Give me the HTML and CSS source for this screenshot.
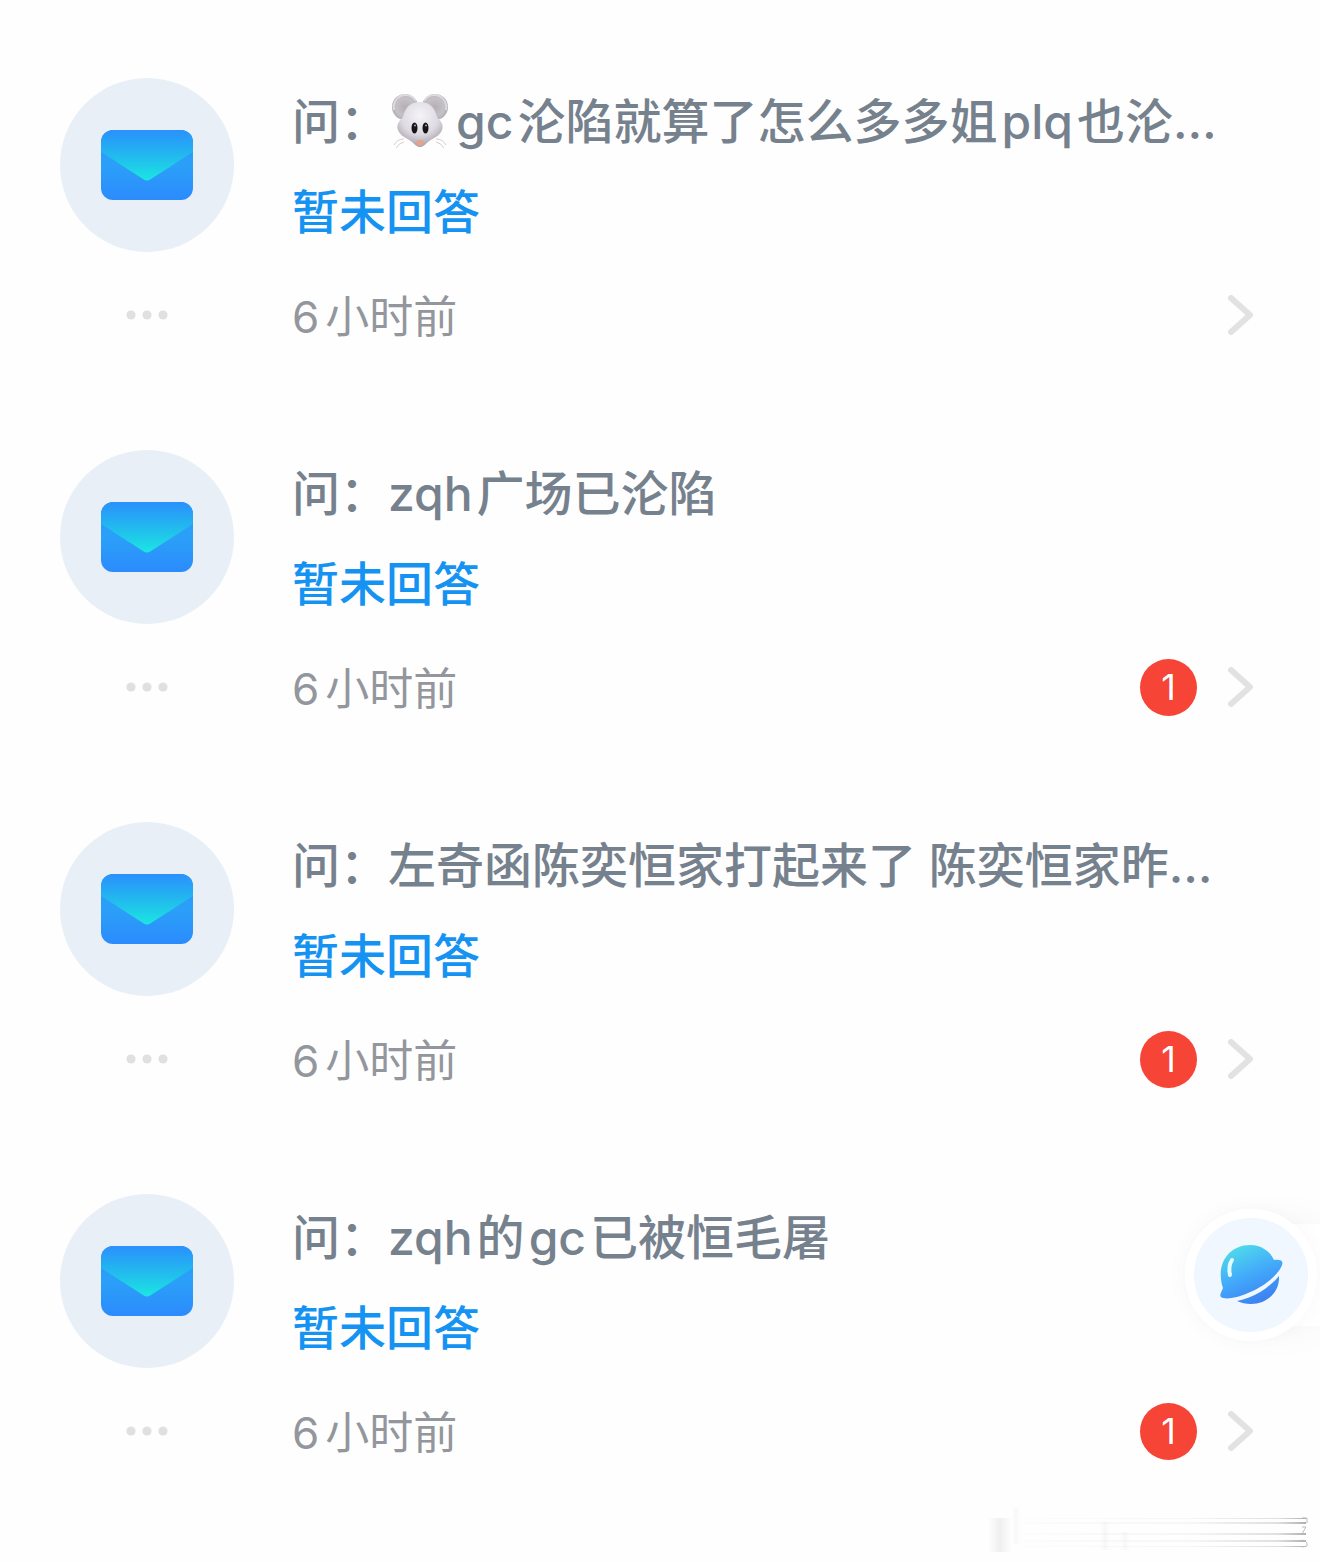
FILE: index.html
```
<!DOCTYPE html>
<html lang="zh-CN">
<head>
  <meta charset="UTF-8">
  <meta name="viewport" content="width=device-width, initial-scale=1.0">
  <title>我的提问</title>
  <link rel="stylesheet" href="styles.css">
</head>
<body>

<!-- shared icons -->
<svg class="sprite" aria-hidden="true">
  <defs>
    <linearGradient id="mail-body" x1="0" y1="0" x2="0" y2="1">
      <stop offset="0" stop-color="#2a96fb"/>
      <stop offset="0.5" stop-color="#2ba0f8"/>
      <stop offset="1" stop-color="#2b8bfd"/>
    </linearGradient>
    <linearGradient id="mail-flap" x1="0" y1="0" x2="0" y2="1">
      <stop offset="0" stop-color="#2a90fd"/>
      <stop offset="0.5" stop-color="#22b9ee"/>
      <stop offset="1" stop-color="#1be6e2"/>
    </linearGradient>
    <clipPath id="mail-clip"><rect width="92" height="70" rx="12"/></clipPath>
  </defs>
  <symbol id="mail" viewBox="0 0 92 70">
    <g clip-path="url(#mail-clip)">
      <rect width="92" height="70" fill="url(#mail-body)"/>
      <path d="M0 0H92V22L50 49Q46 52 42 49L0 22Z" fill="url(#mail-flap)"/>
    </g>
  </symbol>
  <symbol id="dots" viewBox="0 0 42 10">
    <circle cx="5" cy="5" r="4.6"/><circle cx="21" cy="5" r="4.6"/><circle cx="37" cy="5" r="4.6"/>
  </symbol>
  <symbol id="arrow" viewBox="0 0 26 40">
    <path d="M3 3L22 20L3 37" fill="none" stroke="#e2e2e2" stroke-width="6" stroke-linecap="round" stroke-linejoin="round"/>
  </symbol>
</svg>

<main class="list">
  <article class="item">
    <div class="item-main">
      <div class="avatar"><svg><use href="#mail"/></svg></div>
      <div class="content">
        <h2 class="question">问：<svg class="emoji" viewBox="0 0 60 60" role="img" aria-label="🐭">
          <defs>
            <radialGradient id="mouse-face" cx="0.5" cy="0.3" r="0.7">
              <stop offset="0" stop-color="#f5f2f8"/>
              <stop offset="0.6" stop-color="#dedae2"/>
              <stop offset="1" stop-color="#a39da8"/>
            </radialGradient>
            <radialGradient id="mouse-ear" cx="0.5" cy="0.5" r="0.5">
              <stop offset="0" stop-color="#b5afb5"/>
              <stop offset="0.7" stop-color="#c6c1c7"/>
              <stop offset="1" stop-color="#b2aeb4"/>
            </radialGradient>
          </defs>
          <circle cx="15" cy="16" r="13" fill="url(#mouse-ear)"/>
          <circle cx="45" cy="16" r="13" fill="url(#mouse-ear)"/>
          <path d="M4 19A12 12 0 0 1 26 10M56 19A12 12 0 0 0 34 10" fill="none" stroke="#dedbe0" stroke-width="2"/>
          <path d="M14 48Q7 48 4 54M14 51Q9 52 6 57M46 48Q53 48 56 54M46 51Q51 52 54 57" fill="none" stroke="#d5d0cf" stroke-width="1"/>
          <path d="M30 11C41 11 45 18 47 26C51 30 54 34 52 39C50 45 43 47 38 51C34 55 32 56 30 56C28 56 26 55 22 51C17 47 10 45 8 39C6 34 9 30 13 26C15 18 19 11 30 11Z" fill="url(#mouse-face)"/>
          <ellipse cx="24.500" cy="37" rx="3" ry="5.500" fill="#171518"/>
          <ellipse cx="35.500" cy="37" rx="3" ry="5.500" fill="#171518"/>
          <circle cx="25" cy="34.500" r="1" fill="#aaa"/>
          <circle cx="36" cy="34.500" r="1" fill="#aaa"/>
          <path d="M26 50Q30 48 34 50Q33 55 30 55Q27 55 26 50Z" fill="#e8a28b"/>
        </svg><span class="latin-end">gc</span>沦陷就算了怎么多多姐<span class="latin">plq</span>也沦…</h2>
        <p class="answer">暂未回答</p>
      </div>
    </div>
    <div class="item-foot">
      <button class="more" type="button" aria-label="更多"><svg><use href="#dots"/></svg></button>
      <time class="time"><span class="num">6</span>小时前</time>
      <a class="arrow" href="#" aria-label="查看"><svg><use href="#arrow"/></svg></a>
    </div>
  </article>

  <article class="item">
    <div class="item-main">
      <div class="avatar"><svg><use href="#mail"/></svg></div>
      <div class="content">
        <h2 class="question">问：<span class="latin-end">zqh</span>广场已沦陷</h2>
        <p class="answer">暂未回答</p>
      </div>
    </div>
    <div class="item-foot">
      <button class="more" type="button" aria-label="更多"><svg><use href="#dots"/></svg></button>
      <time class="time"><span class="num">6</span>小时前</time>
      <span class="badge">1</span>
      <a class="arrow" href="#" aria-label="查看"><svg><use href="#arrow"/></svg></a>
    </div>
  </article>

  <article class="item">
    <div class="item-main">
      <div class="avatar"><svg><use href="#mail"/></svg></div>
      <div class="content">
        <h2 class="question">问：左奇函陈奕恒家打起来了 陈奕恒家昨…</h2>
        <p class="answer">暂未回答</p>
      </div>
    </div>
    <div class="item-foot">
      <button class="more" type="button" aria-label="更多"><svg><use href="#dots"/></svg></button>
      <time class="time"><span class="num">6</span>小时前</time>
      <span class="badge">1</span>
      <a class="arrow" href="#" aria-label="查看"><svg><use href="#arrow"/></svg></a>
    </div>
  </article>

  <article class="item">
    <div class="item-main">
      <div class="avatar"><svg><use href="#mail"/></svg></div>
      <div class="content">
        <h2 class="question">问：<span class="latin-end">zqh</span>的<span class="latin">gc</span>已被恒毛屠</h2>
        <p class="answer">暂未回答</p>
      </div>
    </div>
    <div class="item-foot">
      <button class="more" type="button" aria-label="更多"><svg><use href="#dots"/></svg></button>
      <time class="time"><span class="num">6</span>小时前</time>
      <span class="badge">1</span>
      <a class="arrow" href="#" aria-label="查看"><svg><use href="#arrow"/></svg></a>
    </div>
  </article>
</main>

<!-- floating planet button, docked to the right edge -->
<button class="planet" type="button" aria-label="星球">
  <span class="planet-disc">
    <svg viewBox="0 0 64 60">
      <defs>
        <linearGradient id="planet-fill" gradientUnits="userSpaceOnUse" x1="20" y1="2" x2="44" y2="58">
          <stop offset="0" stop-color="#4fd8ec"/>
          <stop offset="0.5" stop-color="#42a8fa"/>
          <stop offset="1" stop-color="#3c7ff0"/>
        </linearGradient>
      </defs>
      <path d="M31 0C42 0 51 6 55 15C60 14 65 15 63 20C60 29 45 42 29 48C18 53 6 55 2 52C0 50 3 46 4 43C-4 19 10 0 31 0Z" fill="url(#planet-fill)"/>
      <path d="M18 56C34 53 50 43 60 31C61 47 48 59 32 59C27 59 22 58 18 56Z" fill="url(#planet-fill)"/>
      <path d="M13 15Q9 21 11 30" fill="none" stroke="#e4fbff" stroke-width="4" stroke-linecap="round"/>
    </svg>
  </span>
</button>

<!-- faded strip in the corner -->
<svg class="streak" viewBox="0 0 340 52" aria-hidden="true">
  <defs>
    <linearGradient id="streak-fade" gradientUnits="userSpaceOnUse" x1="40" y1="0" x2="326" y2="0">
      <stop offset="0" stop-color="#999" stop-opacity="0.020"/>
      <stop offset="0.6" stop-color="#999" stop-opacity="0.080"/>
      <stop offset="0.9" stop-color="#999" stop-opacity="0.300"/>
      <stop offset="1" stop-color="#777" stop-opacity="0.600"/>
    </linearGradient>
    <linearGradient id="streak-block">
      <stop offset="0" stop-color="#bbb" stop-opacity="0"/>
      <stop offset="0.5" stop-color="#bbb" stop-opacity="0.220"/>
      <stop offset="1" stop-color="#bbb" stop-opacity="0"/>
    </linearGradient>
  </defs>
  <rect x="8" y="16" width="24" height="34" fill="url(#streak-block)"/>
  <g fill="url(#streak-block)" opacity="0.4">
    <rect x="32" y="6" width="8" height="36"/>
    <rect x="120" y="20" width="10" height="28"/>
    <rect x="140" y="30" width="10" height="18"/>
  </g>
  <g fill="url(#streak-fade)">
    <rect x="40" y="16" width="286" height="1"/>
    <rect x="40" y="20" width="286" height="2"/>
    <rect x="40" y="31" width="286" height="2"/>
    <rect x="40" y="38" width="286" height="2"/>
    <rect x="40" y="44" width="286" height="1"/>
  </g>
  <path d="M322 16H327V21M322 25H326L322 32H325M322 38Q328 39 327 44L322 45" fill="none" stroke="#bbb" stroke-width="1"/>
</svg>

</body>
</html>
```
FILE: styles.css
```
:root {
  --text-color: #76818e;
  --time-color: #93969c;
  --primary-color: #1593f2;
  --badge-color: #f64436;
  --avatar-bg: #e8eff7;
}
* { box-sizing: border-box; }
body {
  font-family: Inter, "Noto Sans CJK SC", sans-serif;
  margin: 0;
  background-color: #fefefe;
  color: var(--text-color);
}
button {
  border: none;
  padding: 0;
  background: none;
  cursor: pointer;
}
svg { display: block; }
.sprite {
  position: absolute;
  width: 0;
  height: 0;
}
.list {
  padding: 73px 66px 0 60px;
}
.item {
  padding-bottom: 98px;
}
.item:last-child { padding-bottom: 0; }
.item-main,
.item-foot {
  display: flex;
  align-items: center;
}
.avatar {
  flex: none;
  width: 174px;
  height: 174px;
  margin-right: 58px;
  border-radius: 50%;
  background-color: var(--avatar-bg);
  display: flex;
  align-items: center;
  justify-content: center;
}
.avatar svg {
  width: 92px;
  height: 70px;
}
.content {
  flex: 1;
  min-width: 0;
  padding-top: 4px;
}
.question,
.answer {
  margin: 0;
  font-size: 48px;
  line-height: 90px;
  font-weight: 500;
  white-space: nowrap;
}
.question {
  overflow: hidden;
}
.answer {
  color: var(--primary-color);
  font-size: 47px;
}
/* breathing room between latin and chinese */
.latin { margin: 0 4px; }
.latin-end { margin-right: 4px; }
.num { margin-right: 6px; }
.emoji {
  display: inline-block;
  width: 60px;
  height: 60px;
  margin: 0 6px 0 2px;
  vertical-align: -12px;
}
.item-foot {
  height: 64px;
  margin-top: 26px;
}
.more {
  flex: none;
  width: 174px;
  height: 64px;
  margin-right: 58px;
  display: flex;
  align-items: center;
  justify-content: center;
}
.more svg {
  width: 42px;
  height: 10px;
  fill: #e0e0e0;
}
.time {
  flex: 1;
  padding-top: 4px;
  color: var(--time-color);
  font-size: 44px;
  line-height: 60px;
}
.badge {
  width: 57px;
  height: 57px;
  border-radius: 50%;
  background-color: var(--badge-color);
  color: #fff;
  font-size: 36px;
  line-height: 57px;
  text-align: center;
}
.arrow { margin-left: 31px; }
.arrow svg {
  width: 26px;
  height: 40px;
}
.planet {
  position: fixed;
  right: 0;
  bottom: 236px;
  width: 120px;
  height: 102px;
  background-color: #fff;
  border-radius: 51px 0 0 51px;
  box-shadow: 0 0 40px rgba(0,0,0,0.05);
  display: flex;
  align-items: center;
}
.planet-disc {
  flex: none;
  width: 132px;
  height: 132px;
  margin-left: -15px;
  border: 9px solid #fff;
  border-radius: 50%;
  background-color: #f1f7ff;
  box-shadow: 0 0 24px rgba(0,0,0,0.03);
  display: flex;
  align-items: center;
  justify-content: center;
}
.planet-disc svg {
  width: 64px;
  height: 60px;
}
.streak {
  position: fixed;
  right: 0;
  bottom: 8px;
  width: 340px;
  height: 52px;
}
```
